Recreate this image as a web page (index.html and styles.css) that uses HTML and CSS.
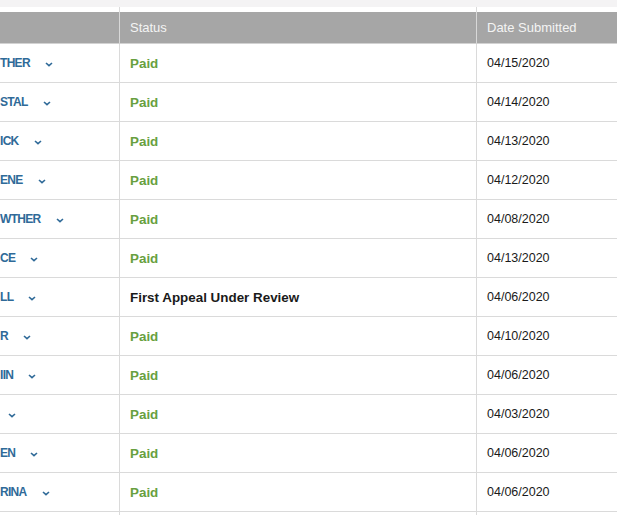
FILE: index.html
```html
<!DOCTYPE html>
<html>
<head>
<meta charset="utf-8">
<link rel="stylesheet" href="styles.css">
</head>
<body>
<div class="strip"></div>
<div class="table">
  <div class="row spacer"><div class="cell"></div><div class="cell"></div><div class="cell"></div></div>
  <div class="row head"><div class="cell"></div><div class="cell">Status</div><div class="cell">Date Submitted</div></div>
  <div class="row"><div class="cell name"><span>THER</span><svg class="chev" viewBox="0 0 8 5"><path d="M1 1 L4 3.6 L7 1"/></svg></div><div class="cell paid">Paid</div><div class="cell date">04/15/2020</div></div>
  <div class="row"><div class="cell name"><span>STAL</span><svg class="chev" viewBox="0 0 8 5"><path d="M1 1 L4 3.6 L7 1"/></svg></div><div class="cell paid">Paid</div><div class="cell date">04/14/2020</div></div>
  <div class="row"><div class="cell name"><span>ICK</span><svg class="chev" viewBox="0 0 8 5"><path d="M1 1 L4 3.6 L7 1"/></svg></div><div class="cell paid">Paid</div><div class="cell date">04/13/2020</div></div>
  <div class="row"><div class="cell name"><span>ENE</span><svg class="chev" viewBox="0 0 8 5"><path d="M1 1 L4 3.6 L7 1"/></svg></div><div class="cell paid">Paid</div><div class="cell date">04/12/2020</div></div>
  <div class="row"><div class="cell name"><span>WTHER</span><svg class="chev" viewBox="0 0 8 5"><path d="M1 1 L4 3.6 L7 1"/></svg></div><div class="cell paid">Paid</div><div class="cell date">04/08/2020</div></div>
  <div class="row"><div class="cell name"><span>CE</span><svg class="chev" viewBox="0 0 8 5"><path d="M1 1 L4 3.6 L7 1"/></svg></div><div class="cell paid">Paid</div><div class="cell date">04/13/2020</div></div>
  <div class="row"><div class="cell name"><span>LL</span><svg class="chev" viewBox="0 0 8 5"><path d="M1 1 L4 3.6 L7 1"/></svg></div><div class="cell review">First Appeal Under Review</div><div class="cell date">04/06/2020</div></div>
  <div class="row"><div class="cell name"><span>R</span><svg class="chev" viewBox="0 0 8 5"><path d="M1 1 L4 3.6 L7 1"/></svg></div><div class="cell paid">Paid</div><div class="cell date">04/10/2020</div></div>
  <div class="row"><div class="cell name"><span>IIN</span><svg class="chev" viewBox="0 0 8 5"><path d="M1 1 L4 3.6 L7 1"/></svg></div><div class="cell paid">Paid</div><div class="cell date">04/06/2020</div></div>
  <div class="row"><div class="cell name"><span class="empty"></span><svg class="chev" viewBox="0 0 8 5"><path d="M1 1 L4 3.6 L7 1"/></svg></div><div class="cell paid">Paid</div><div class="cell date">04/03/2020</div></div>
  <div class="row"><div class="cell name"><span>EN</span><svg class="chev" viewBox="0 0 8 5"><path d="M1 1 L4 3.6 L7 1"/></svg></div><div class="cell paid">Paid</div><div class="cell date">04/06/2020</div></div>
  <div class="row"><div class="cell name"><span>RINA</span><svg class="chev" viewBox="0 0 8 5"><path d="M1 1 L4 3.6 L7 1"/></svg></div><div class="cell paid">Paid</div><div class="cell date">04/06/2020</div></div>
  <div class="row"><div class="cell name"></div><div class="cell"></div><div class="cell"></div></div>
</div>
</body>
</html>
```

FILE: styles.css
```css
html, body {
  margin: 0;
  padding: 0;
  background: #ffffff;
  overflow: hidden;
}
body {
  font-family: "Liberation Sans", Arial, sans-serif;
  font-size: 13px;
  width: 617px;
  height: 515px;
}
.strip {
  height: 7px;
  background: #f4f3f4;
}
.table {
  display: flex;
  flex-direction: column;
}
.row {
  display: grid;
  grid-template-columns: 119px 357px 1fr;
  height: 38px;
  border-bottom: 1px solid #dadada;
}
.row.spacer {
  height: 5px;
  border-bottom: none;
}
.row.head {
  height: 31px;
  background: #a6a6a6;
  color: #f4f4f4;
  border-bottom: 1px solid #d2d2d2;
}
.cell {
  display: flex;
  align-items: center;
  padding-left: 10px;
  white-space: nowrap;
  overflow: hidden;
}
.cell + .cell {
  border-left: 1px solid #dadada;
}
.row.head .cell + .cell {
  border-left-color: #d8d8d8;
}
.cell.name {
  padding-left: 0;
  color: #2f6a98;
  font-weight: bold;
  font-size: 12px;
  letter-spacing: -0.7px;
}
.name span {
  margin-right: 15px;
}
.name span.empty {
  margin-right: 8px;
}
.chev {
  width: 8px;
  height: 5px;
  margin-top: 2px;
  flex: none;
}
.chev path {
  fill: none;
  stroke: #2f6a98;
  stroke-width: 1.6;
}
.paid {
  color: #68a040;
  font-weight: bold;
  font-size: 13.4px;
}
.review {
  color: #1a1a1a;
  font-weight: bold;
  font-size: 13.4px;
}
.date {
  color: #1a1a1a;
  font-size: 12.5px;
}
```
